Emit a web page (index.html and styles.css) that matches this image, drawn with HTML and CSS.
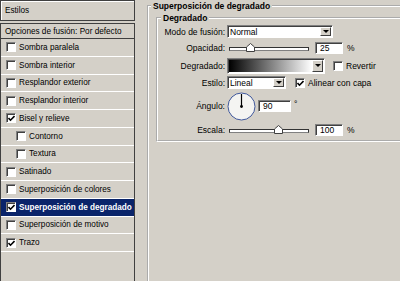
FILE: index.html
```html
<!DOCTYPE html>
<html lang="es">
<head>
    <meta charset="UTF-8">
    <meta name="viewport" content="width=device-width, initial-scale=1.0">
    <title>Estilo de capa</title>
    <link rel="stylesheet" href="styles.css">
</head>
<body>
    <div class="layer-style">
        <div class="styles-panel">
            <div class="panel-title">Estilos</div>
            <ul class="style-list">
                <li class="style-item blend">Opciones de fusión: Por defecto</li>
                <li class="style-item"><span class="check"></span>Sombra paralela</li>
                <li class="style-item"><span class="check"></span>Sombra interior</li>
                <li class="style-item"><span class="check"></span>Resplandor exterior</li>
                <li class="style-item"><span class="check"></span>Resplandor interior</li>
                <li class="style-item"><span class="check on"><svg viewBox="0 0 7 7"><path d="M0.5 3 L2.5 5.2 L6.5 1" /></svg></span>Bisel y relieve</li>
                <li class="style-item sub"><span class="check"></span>Contorno</li>
                <li class="style-item sub"><span class="check"></span>Textura</li>
                <li class="style-item"><span class="check"></span>Satinado</li>
                <li class="style-item"><span class="check"></span>Superposición de colores</li>
                <li class="style-item selected"><span class="check on"><svg viewBox="0 0 7 7"><path d="M0.5 3 L2.5 5.2 L6.5 1" /></svg></span>Superposición de degradado</li>
                <li class="style-item"><span class="check"></span>Superposición de motivo</li>
                <li class="style-item"><span class="check on"><svg viewBox="0 0 7 7"><path d="M0.5 3 L2.5 5.2 L6.5 1" /></svg></span>Trazo</li>
            </ul>
        </div>

        <div class="settings">
            <fieldset class="group outer">
                <legend>Superposición de degradado</legend>
                <fieldset class="group inner">
                    <legend>Degradado</legend>
                    <div class="form-grid">
                        <span class="label">Modo de fusión:</span>
                        <div class="ctrl">
                            <div class="select mode"><span>Normal</span><span class="drop"></span></div>
                        </div>

                        <span class="label">Opacidad:</span>
                        <div class="ctrl">
                            <div class="slider"><svg class="thumb" style="left: 25%" viewBox="0 0 9 9"><polygon points="0.5,8.5 0.5,4 4.5,0.5 8.5,4 8.5,8.5" /></svg></div>
                            <div class="field">25</div>
                            <span class="unit">%</span>
                        </div>

                        <span class="label">Degradado:</span>
                        <div class="ctrl">
                            <div class="gradient-pick"><span class="ramp"></span><span class="drop"></span></div>
                            <span class="check box-gap"></span>
                            <span class="check-text">Revertir</span>
                        </div>

                        <span class="label">Estilo:</span>
                        <div class="ctrl">
                            <div class="select style"><span>Lineal</span><span class="drop"></span></div>
                            <span class="check on box-gap"><svg viewBox="0 0 7 7"><path d="M0.5 3 L2.5 5.2 L6.5 1" /></svg></span>
                            <span class="check-text">Alinear con capa</span>
                        </div>

                        <span class="label">Ángulo:</span>
                        <div class="ctrl">
                            <svg class="dial" viewBox="0 0 29 29">
                                <circle cx="14.5" cy="14.5" r="13.5" class="dial-face" />
                                <line x1="14.5" y1="14.5" x2="14.5" y2="2" class="dial-hand" />
                                <circle cx="14.5" cy="14.5" r="1.4" class="dial-dot" />
                            </svg>
                            <div class="field angle">90</div>
                            <span class="unit deg">°</span>
                        </div>

                        <span class="label">Escala:</span>
                        <div class="ctrl">
                            <div class="slider"><svg class="thumb" style="left: 61%" viewBox="0 0 9 9"><polygon points="0.5,8.5 0.5,4 4.5,0.5 8.5,4 8.5,8.5" /></svg></div>
                            <div class="field">100</div>
                            <span class="unit">%</span>
                        </div>
                    </div>
                </fieldset>
            </fieldset>
        </div>
    </div>
</body>
</html>
```

FILE: styles.css
```css
* {
    box-sizing: border-box;
}

body {
    margin: 0;
    background: #d4d0c8;
    font-family: "Liberation Sans", Arial, sans-serif;
    font-size: 8.5px;
    color: #000;
    overflow: hidden;
}

.layer-style {
    display: flex;
    width: 400px;
    height: 281px;
    overflow: hidden;
}

/* left list of styles */
.styles-panel {
    width: 135px;
    flex: none;
    display: flex;
    flex-direction: column;
    font-size: 8.2px;
}

.panel-title {
    height: 21px;
    border: 1px solid #404040;
    box-shadow: inset 1px 1px #fff;
    padding-left: 4px;
    line-height: 19px;
}

.style-list {
    list-style: none;
    margin: 2px 0 0;
    padding: 0;
    flex: 1;
    border: 1px solid #404040;
    border-bottom: none;
}

.style-item {
    height: 17.75px;
    display: flex;
    align-items: center;
    gap: 3px;
    padding-left: 5px;
    border-bottom: 1px solid #fff;
    white-space: nowrap;
}

.style-item.blend {
    height: 15px;
    padding-left: 4px;
    border-bottom: 1px solid #404040;
}

.style-item.sub {
    padding-left: 15px;
}

.style-item.selected {
    background: #0a246a;
    color: #fff;
    font-weight: bold;
}

.check {
    width: 10px;
    height: 10px;
    flex: none;
    background: #fff;
    border: 1px solid;
    border-color: #808080 #fff #fff #808080;
    box-shadow: inset 1px 1px #404040;
    display: inline-flex;
    align-items: center;
    justify-content: center;
}

.check svg {
    width: 7px;
    height: 7px;
    margin: 1px 0 0 1px;
}

.check path {
    fill: none;
    stroke: #000;
    stroke-width: 1.6;
}

/* right settings */
.settings {
    flex: 1;
    padding-left: 12px;
}

.group {
    margin: 0;
    border: 2px groove #fff;
    min-width: 0;
}

.group legend {
    padding: 0 2px;
    font-weight: bold;
    line-height: 12px;
}

.outer {
    width: 300px;
    height: 300px;
    padding: 0 0 0 2px;
}

.inner {
    width: 260px;
    margin-left: 5px;
    padding: 1px 0 4px 3px;
}

.form-grid {
    display: grid;
    grid-template-columns: 64px auto;
    grid-template-rows: 13px 14px 15px 13px 28px 13px;
    column-gap: 2px;
    row-gap: 3px;
}

.label {
    text-align: right;
    align-self: center;
    white-space: nowrap;
}

.ctrl {
    display: flex;
    align-items: center;
}

.select,
.field,
.gradient-pick {
    background: #fff;
    border: 1px solid;
    border-color: #808080 #fff #fff #808080;
    box-shadow: inset 1px 1px #404040;
}

.select {
    display: flex;
    align-items: stretch;
    height: 13px;
    padding: 1px 1px 1px 2px;
}

.select span:first-child {
    flex: 1;
    line-height: 10px;
}

.mode {
    width: 106px;
}

.style {
    width: 59px;
}

.drop {
    width: 11px;
    flex: none;
    background: #d4d0c8;
    border: 1px solid;
    border-color: #fff #404040 #404040 #fff;
    display: flex;
    align-items: center;
    justify-content: center;
}

.drop::after {
    content: "";
    border-left: 3px solid transparent;
    border-right: 3px solid transparent;
    border-top: 3px solid #000;
}

.slider {
    position: relative;
    width: 80px;
    height: 4px;
    margin: 2px 0 0 2px;
    background: #fff;
    border: 1px solid #333;
    border-bottom-color: #808080;
}

.thumb {
    position: absolute;
    width: 9px;
    height: 9px;
    bottom: -2px;
    margin-left: -4px;
}

.thumb polygon {
    fill: #fff;
    stroke: #404040;
}

.field {
    height: 12px;
    width: 28px;
    margin-left: 6px;
    padding-left: 4px;
    line-height: 10px;
}

.unit {
    margin-left: 4px;
}

.gradient-pick {
    display: flex;
    width: 98px;
    height: 16px;
    padding: 1px;
}

.ramp {
    flex: 1;
    background: linear-gradient(to right, #000, #fff);
}

.box-gap {
    margin-left: 8px;
}

.style + .box-gap {
    margin-left: 9px;
}

.check-text {
    margin-left: 3px;
}

.dial {
    width: 29px;
    height: 29px;
}

.dial-face {
    fill: #f4f4f2;
    stroke: #40589c;
}

.dial-hand {
    stroke: #000;
    stroke-width: 1.2;
}

.dial-dot {
    fill: #000;
}

.field.angle {
    width: 33px;
    margin-left: 2px;
}

.deg {
    margin-left: 3px;
    align-self: flex-start;
    margin-top: 7px;
}
```
